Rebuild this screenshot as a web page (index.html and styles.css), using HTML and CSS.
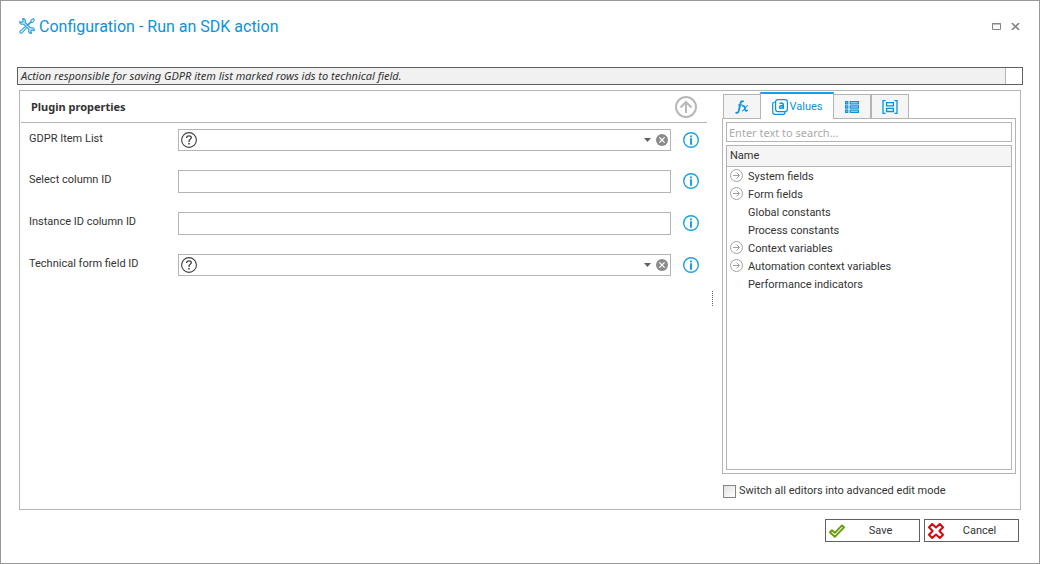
FILE: index.html
```html
<!DOCTYPE html>
<html lang="en">
<head>
<meta charset="utf-8">
<title>Configuration - Run an SDK action</title>
<link rel="stylesheet" href="styles.css">
</head>
<body>
<svg class="defs" aria-hidden="true">
  <symbol id="question" viewBox="0 0 16 16"><circle cx="8" cy="8" r="7.4" fill="none" stroke="#404040" stroke-width="1.1"/><path d="M5.6 6V5.6Q5.8 3.8 8 3.8T10.3 5.6Q10.3 6.6 9.2 7.2T8 9.4V10" fill="none" stroke="#404040" stroke-width="1.3"/><path d="M7.2 11h1.6v1.6H7.2z" fill="#404040"/></symbol>
  <symbol id="info" viewBox="0 0 16 16"><circle cx="8" cy="8" r="7.3" fill="none" stroke="#1ba1e2" stroke-width="1.4"/><path d="M7 3.4h2v1.8H7zM7 6.2h2v6.6H7z" fill="#1ba1e2"/></symbol>
  <symbol id="clear" viewBox="0 0 12 12"><circle cx="6" cy="6" r="6" fill="#8a8a8a"/><path d="M3.4 3.4l5.2 5.2M8.6 3.4L3.4 8.6" stroke="#fff" stroke-width="1.3"/></symbol>
  <symbol id="caret" viewBox="0 0 7 4"><path d="M0 0h7L3.5 4z" fill="#606060"/></symbol>
  <symbol id="expand" viewBox="0 0 13 13"><g fill="none" stroke="#a2a2a2"><circle cx="6.5" cy="6.5" r="6"/><path d="M3 6.5h6.5M6.5 3.5l3 3-3 3"/></g></symbol>
</svg>
<main class="dialog">
  <header class="titlebar">
    <svg class="tools" viewBox="0 0 16 16"><g fill="none" stroke="#2a9fdc" stroke-width="1.1" stroke-linejoin="round"><path d="M.7 3.6L2.9 4.4 4.2 3.1 3.5.7Q5.8.4 6.4 2.4L6.2 4.5 11.6 9.8 13.7 9.7Q15.9 10.6 15.2 12.8L13.1 11.9 11.8 13.1 12.6 15.3Q10.2 15.6 9.6 13.5L9.8 11.4 4.5 6.2 2.5 6.3Q.3 5.6.7 3.6z" fill="#c4e7f9"/><path d="M15.4 1.5L14.5.6 12.2 2 11.8 3.6 7.9 7.5M11.8 3.6l.8.8L14.2 4l1.2-2.5M12.4 3.8L8.6 7.6M6.6 8.3L1 13.4Q.6 14.5 1.4 15.1 2.3 15.5 2.9 14.8L7.8 9.5"/></g></svg>
    <h1 class="title">Configuration - Run an SDK action</h1>
    <button class="win-btn" aria-label="Maximize"><svg viewBox="0 0 9 7" width="9" height="7"><path d="M.5.5h8v6h-8zM0 1h9" fill="none" stroke="#858585"/></svg></button>
    <button class="win-btn" aria-label="Close"><svg viewBox="0 0 9 7" width="9" height="7"><path d="M.8 0l7.4 7M8.2 0L.8 7" fill="none" stroke="#858585" stroke-width="1.7"/></svg></button>
  </header>
  <div class="description"><p class="description-text">Action responsible for saving GDPR item list marked rows ids to technical field.</p></div>
  <div class="content">
    <section class="properties">
      <div class="section-head">
        <h2 class="section-title">Plugin properties</h2>
        <button class="collapse" aria-label="Collapse"><svg viewBox="0 0 22 22" width="22" height="22"><g fill="none" stroke="#b8b8b8" stroke-width="2"><circle cx="11" cy="11" r="10"/><path d="M11 17V6M5.5 11.5L11 6l5.5 5.5"/></g></svg></button>
      </div>
      <div class="rows">
        <div class="row">
          <label class="label" for="item-list">GDPR Item List</label>
          <div class="field combo"><svg class="icon"><use href="#question"/></svg><select class="select" id="item-list"><option></option></select><svg class="caret"><use href="#caret"/></svg><button class="clear" aria-label="Clear"><svg class="clear-icon"><use href="#clear"/></svg></button></div>
          <button class="info" aria-label="Information"><svg class="icon"><use href="#info"/></svg></button>
        </div>
        <div class="row">
          <label class="label" for="column-id">Select column ID</label>
          <input class="field text" id="column-id" type="text">
          <button class="info" aria-label="Information"><svg class="icon"><use href="#info"/></svg></button>
        </div>
        <div class="row">
          <label class="label" for="instance-id">Instance ID column ID</label>
          <input class="field text" id="instance-id" type="text">
          <button class="info" aria-label="Information"><svg class="icon"><use href="#info"/></svg></button>
        </div>
        <div class="row">
          <label class="label" for="technical-id">Technical form field ID</label>
          <div class="field combo"><svg class="icon"><use href="#question"/></svg><select class="select" id="technical-id"><option></option></select><svg class="caret"><use href="#caret"/></svg><button class="clear" aria-label="Clear"><svg class="clear-icon"><use href="#clear"/></svg></button></div>
          <button class="info" aria-label="Information"><svg class="icon"><use href="#info"/></svg></button>
        </div>
      </div>
    </section>
    <div class="splitter"></div>
    <aside class="side">
      <div class="tabs" role="tablist">
        <button class="tab" role="tab" aria-label="Functions"><svg viewBox="0 0 14 14" width="14" height="14"><g fill="none" stroke="#0a93dc" stroke-linecap="round"><path d="M8.2 1.4Q6.4.3 5.6 3L3.7 11Q3 13.4 1.2 12.7" stroke-width="1.8"/><path d="M3.4 5h4" stroke-width="1.2"/><path d="M7.8 6.1Q9.1 5.3 9.6 7.2L10.2 10Q10.8 11.6 12.2 10.4" stroke-width="1.6"/><path d="M12.6 5.8Q11.5 5.6 10.2 8T7.4 10.9" stroke-width="1.1"/></g></svg></button>
        <button class="tab active" role="tab" aria-selected="true"><svg viewBox="0 0 16 16" width="16" height="16"><g fill="none" stroke="#0a93dc" stroke-width="1.2"><rect x="3.6" y=".6" width="11.8" height="12" rx="2.4"/><path d="M3.2 3Q.7 3 .7 5v8q0 2.4 2.4 2.4h8q2 0 2-2.6"/><path d="M7.4 4.6Q11.3 3.2 11.3 5.9V9.7M11.2 6.8Q7.5 6.5 7.5 8.1T9.2 9.3 11.2 8" stroke-width="1.5"/></g></svg>Values</button>
        <button class="tab" role="tab" aria-label="Form"><svg viewBox="0 0 14 12" width="14" height="12"><g fill="#b5e0f8" stroke="#0a93dc" stroke-width="1.2"><path d="M.6.6h2.2v2.2H.6zM.6 4.9h2.2v2.2H.6zM.6 9.2h2.2v2.2H.6zM5.2.6h8.2v2.2H5.2zM5.2 4.9h8.2v2.2H5.2zM5.2 9.2h8.2v2.2H5.2z"/></g></svg></button>
        <button class="tab last" role="tab" aria-label="Objects"><svg viewBox="0 0 16 14" width="16" height="14"><g fill="none" stroke="#0a93dc" stroke-width="1.3"><path d="M3.5.6H1v12.8h2.5M12.5.6H15v12.8h-2.5M4.6 2.6h6.8v3.2H4.6zM4.6 8.3h6.8v3.2H4.6z"/></g></svg></button>
      </div>
      <div class="tab-panel" role="tabpanel">
        <input class="search" type="text" placeholder="Enter text to search..." aria-label="Search">
        <div class="tree">
          <table class="tree-table">
            <thead><tr><th class="tree-head" colspan="2">Name</th></tr></thead>
            <tbody>
              <tr><td class="toggle"><svg class="expand"><use href="#expand"/></svg></td><td class="node">System fields</td></tr>
              <tr><td class="toggle"><svg class="expand"><use href="#expand"/></svg></td><td class="node">Form fields</td></tr>
              <tr><td class="toggle"></td><td class="node">Global constants</td></tr>
              <tr><td class="toggle"></td><td class="node">Process constants</td></tr>
              <tr><td class="toggle"><svg class="expand"><use href="#expand"/></svg></td><td class="node">Context variables</td></tr>
              <tr><td class="toggle"><svg class="expand"><use href="#expand"/></svg></td><td class="node">Automation context variables</td></tr>
              <tr><td class="toggle"></td><td class="node">Performance indicators</td></tr>
            </tbody>
          </table>
        </div>
      </div>
      <label class="switch"><input class="checkbox" type="checkbox">Switch all editors into advanced edit mode</label>
    </aside>
  </div>
  <footer class="actions">
    <button class="action"><svg viewBox="0 0 16 14" width="16" height="14"><path d="M1 8.2L3 6.2 5.8 8.8 13 1.4 15 3.3 5.8 12.9z" fill="#fff" stroke="#669c06" stroke-width="1.9" stroke-linejoin="round"/></svg><span class="action-text">Save</span></button>
    <button class="action"><svg viewBox="0 0 16 16" width="16" height="16"><path d="M4.2 1L8 4.5 11.8 1 15 4.2 11.4 8 15 11.8 11.8 15 8 11.5 4.2 15 1 11.8 4.6 8 1 4.2z" fill="#fff" stroke="#d20a11" stroke-width="2" stroke-linejoin="round"/></svg><span class="action-text">Cancel</span></button>
  </footer>
</main>
</body>
</html>
```
FILE: styles.css
```css
* { box-sizing: border-box; }
body, h1, h2, p { margin: 0; }
body { font: 11px/16px Roboto, Tahoma, sans-serif; color: #333; background: #fff; }
button { font: inherit; color: inherit; background: none; border: 0; padding: 0; display: flex; align-items: center; justify-content: center; }
svg { display: block; flex: none; }
.defs { position: absolute; width: 0; height: 0; }

.dialog { min-height: 100vh; border: 1px solid #999; display: flex; flex-direction: column; padding: 0 16px 21px; }
.titlebar { display: flex; align-items: center; gap: 10px; height: 50px; padding: 0 3px 0 2px; margin-bottom: 16px; }
.tools { width: 16px; height: 16px; }
.title { flex: 1; margin-left: -6px; padding-top: 2px; font-size: 16px; line-height: 24px; font-weight: 400; color: #0a93dc; }
.win-btn { height: 16px; }

.description { display: flex; height: 18px; border: 1px solid #606060; padding-right: 16px; }
.description-text { flex: 1; padding-left: 3px; background: #f1f1f1; border-right: 1px solid #b4b4b4; font-family: "Noto Sans", Tahoma, sans-serif; font-style: italic; white-space: nowrap; }

.content { flex: 1; display: flex; margin: 5px 2px 9px; border: 1px solid #b4b4b4; padding: 1px 4px 10px 1px; }
.properties { flex: 1; }
.section-head { display: flex; align-items: center; justify-content: space-between; height: 31px; padding: 0 10px; margin-bottom: 6px; border-bottom: 1px solid #b4b4b4; }
.section-title { font: 700 11px/16px "Noto Sans", Tahoma, sans-serif; }
.rows { display: flex; flex-direction: column; gap: 19px; padding: 0 8px; }
.row { display: flex; align-items: flex-start; }
.label { width: 149px; padding-top: 2px; }
.field { flex: 1; min-width: 0; border: 1px solid #b4b4b4; padding: 0 2px; background: #fff; font: inherit; }
.combo { display: flex; align-items: center; height: 22px; }
.text { height: 23px; }
.icon { width: 16px; height: 16px; }
.select { flex: 1; min-width: 0; height: 18px; appearance: none; border: 0; background: none; font: inherit; }
.caret { width: 7px; height: 4px; margin-right: 5px; }
.clear-icon { width: 12px; height: 12px; }
.info { height: 22px; margin-left: 12px; }

.splitter { width: 5px; margin: 6px 5px 0; height: 15px; align-self: center; border-left: 1px dotted #606060; }

.side { width: 294px; display: flex; flex-direction: column; }
.tabs { display: flex; align-items: flex-end; height: 27px; padding-left: 1px; }
.tab { width: 37px; height: 25px; gap: 2px; border: 1px solid #b4b4b4; border-left-width: 0; background: #f5f5f5; }
.tab:first-child { border-width: 1px 0 1px 1px; }
.tab.active { position: relative; z-index: 1; width: 74px; height: 27px; border: 1px solid #b4b4b4; border-top: 2px solid #0aa0f5; border-bottom: 0; background: #fff; color: #0a93dc; }
.tab.last { width: 38px; border-left-width: 1px; }
.tab-panel { flex: 1; display: flex; flex-direction: column; gap: 3px; border: 1px solid #b4b4b4; margin-top: -1px; padding: 3px; }
.search { height: 20px; border: 1px solid #b4b4b4; padding: 0 2px; font: 11px/16px "Noto Sans", Tahoma, sans-serif; }
.search::placeholder { color: #aaa; opacity: 1; }
.tree { flex: 1; border: 1px solid #b4b4b4; }
.tree-table { width: 100%; border-collapse: collapse; }
.tree-head { height: 20px; padding: 0 3px; border-bottom: 1px solid #b4b4b4; background: #f5f5f5; font-weight: 400; text-align: left; }
.toggle { width: 19px; height: 18px; padding: 0 0 0 3px; }
.node { height: 18px; padding: 2px 2px 0; }
.expand { width: 13px; height: 13px; }
.switch { display: flex; align-items: center; gap: 3px; margin-top: 9px; padding-left: 1px; }
.checkbox { appearance: none; width: 13px; height: 13px; margin: 0; border: 1px solid #858585; background: linear-gradient(135deg, #e2e2e2, #fff); }

.actions { display: flex; justify-content: flex-end; gap: 4px; padding-right: 4px; }
.action { width: 95px; height: 23px; padding: 0 3px; border: 1px solid #606060; }
.action-text { flex: 1; text-align: center; }
```
